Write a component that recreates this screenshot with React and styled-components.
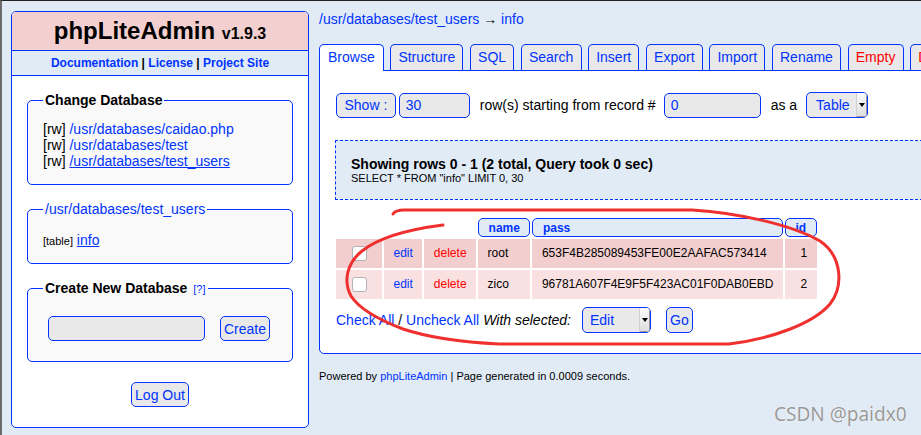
import React from 'react';
import styled, { createGlobalStyle } from 'styled-components';

const BLUE = '#0033ff';
const BG = '#e0ebf6';
const PINK = '#f3cfcf';
const RED = '#ff0000';

const Global = createGlobalStyle`
  html, body { margin: 0; padding: 0; background: ${BG}; overflow: hidden; }
  body { font-family: "Liberation Sans", Arial, sans-serif; color: #000; font-size: 14px; }
  a { color: ${BLUE}; text-decoration: none; }
`;

const Frame = styled.div`
  position: relative;
  width: 921px;
  height: 435px;
  box-sizing: border-box;
  border-top: 1px solid #222;
  border-left: 2px solid #6a6a6a;
  padding: 10px 0 0 9px;
  display: flex;
  align-items: flex-start;
  gap: 10px;
  overflow: hidden;
`;

/* ---------- sidebar ---------- */
const Sidebar = styled.div`
  flex: none;
  width: 298px;
  box-sizing: border-box;
  border: 1px solid ${BLUE};
  border-radius: 5px;
  background: #fff;
  overflow: hidden;
`;

const Title = styled.h1`
  margin: 0;
  background: ${PINK};
  text-align: center;
  font-size: 24px;
  font-weight: bold;
  line-height: 28px;
  height: 28px;
  padding: 5px 0;
  border-bottom: 1px solid ${BLUE};
`;

const Version = styled.span`
  font-size: 16px;
  line-height: 1;
`;

const LinkBar = styled.div`
  background: ${BG};
  text-align: center;
  padding: 5px 0;
  font-size: 12px;
  line-height: 14px;
  font-weight: bold;
  border-bottom: 1px solid ${BLUE};
`;

const SideBody = styled.div`
  padding: 16px 15px 20px;
`;

const Fieldset = styled.fieldset`
  margin: 0 0 16px;
  padding: 13px 15px 15px;
  border: 1px solid ${BLUE};
  border-radius: 5px;
  background: #f9f9f9;
  min-width: 0;
`;

const Legend = styled.legend`
  padding: 0 2px;
  font-size: 14px;
  line-height: 16px;
  font-weight: ${p => (p.$plain ? 'normal' : 'bold')};
`;

const Help = styled.a`
  font-size: 11px;
  line-height: 1;
  font-weight: normal;
  margin-left: 2px;
`;

const DbLine = styled.div`
  font-size: 14px;
  line-height: 16px;
  white-space: nowrap;
`;

const DbLink = styled.a`
  text-decoration: ${p => (p.$current ? 'underline' : 'none')};
`;

const TableLine = styled.div`
  margin-top: 2px;
  height: 16px;
  line-height: 16px;
`;

const Tag = styled.span`
  font-size: 11px;
  line-height: 1;
`;

const TableLink = styled.a`
  font-size: 14px;
  text-decoration: underline;
`;

const CreateRow = styled.div`
  display: flex;
  align-items: center;
  gap: 15px;
  padding: 7px 5px 5px;
`;

const LogoutRow = styled.div`
  display: flex;
  justify-content: center;
  margin-top: 20px;
`;

/* ---------- form controls ---------- */
const Button = styled.button`
  box-sizing: border-box;
  height: ${p => p.$h || 25}px;
  padding: 0 ${p => (p.$wide ? 7.5 : 3)}px;
  margin-left: ${p => p.$ml || 0}px;
  font-family: "Liberation Sans", Arial, sans-serif;
  font-size: 14px;
  color: ${BLUE};
  background: #e9e9e9;
  border: 1px solid ${BLUE};
  border-radius: 5px;
  flex: none;
`;

const TextInput = styled.input`
  box-sizing: border-box;
  width: ${p => p.$w}px;
  height: 25px;
  margin-left: ${p => p.$ml || 0}px;
  padding: 0 6px;
  font-family: "Liberation Sans", Arial, sans-serif;
  font-size: 14px;
  color: ${BLUE};
  background: #e9e9e9;
  border: 1px solid ${BLUE};
  border-radius: 5px;
  outline: none;
  flex: none;
`;

const SelectBox = styled.div`
  display: inline-flex;
  align-items: stretch;
  box-sizing: border-box;
  width: ${p => p.$w}px;
  height: 26px;
  margin-left: ${p => p.$ml || 0}px;
  border: 1px solid ${BLUE};
  border-radius: 5px;
  background: #e9e9e9;
  color: ${BLUE};
  overflow: hidden;
  flex: none;
`;

const SelectText = styled.span`
  flex: 1;
  padding-left: ${p => p.$pl}px;
  font-size: 14px;
  line-height: 24px;
`;

const SelectArrow = styled.span`
  position: relative;
  width: 10px;
  background: linear-gradient(#fbfbfb, #dcdcdc);
  border-left: 1px solid #cfcfcf;
  box-shadow: inset -1px -1px 0 #9a9a9a;
  &::after {
    content: '';
    position: absolute;
    left: 2px;
    top: 10px;
    border-left: 3px solid transparent;
    border-right: 3px solid transparent;
    border-top: 4px solid #000;
  }
`;

const Select = ({ w, ml, pl, children }) => (
  <SelectBox $w={w} $ml={ml}>
    <SelectText $pl={pl}>{children}</SelectText>
    <SelectArrow />
  </SelectBox>
);

/* ---------- main ---------- */
const Main = styled.div`
  flex: none;
  width: 680px;
`;

const Crumb = styled.div`
  font-size: 14px;
  line-height: 16px;
  margin-bottom: 17px;
  white-space: nowrap;
`;

const Tabs = styled.div`
  display: flex;
  gap: 6.5px;
  white-space: nowrap;
  position: relative;
  z-index: 1;
`;

const Tab = styled.a`
  display: block;
  flex: none;
  padding: 4px ${p => (p.$active ? 8 : 7.2)}px ${p => (p.$active ? 6 : 5)}px;
  margin-bottom: ${p => (p.$active ? -1 : 0)}px;
  font-size: 14px;
  line-height: 16px;
  color: ${p => (p.$danger ? RED : BLUE)};
  background: ${p => (p.$active ? '#fff' : '#e9e9e9')};
  border: 1px solid ${BLUE};
  border-bottom: none;
  border-radius: 5px 5px 0 0;
`;

const Panel = styled.div`
  background: #fff;
  border: 1px solid ${BLUE};
  border-radius: 0 0 0 5px;
  padding: 21px 0 20px 16px;
`;

const ControlRow = styled.div`
  display: flex;
  align-items: center;
  height: 26px;
  white-space: nowrap;
`;

const Label = styled.span`
  margin: 0 ${p => p.$mr || 0}px 0 ${p => p.$ml || 0}px;
  font-style: ${p => (p.$italic ? 'italic' : 'normal')};
`;

const InfoBox = styled.div`
  margin: 22px 20px 0 -1px;
  padding: 15px 14px 14px 15px;
  border: 1px dashed ${BLUE};
  background: ${BG};
`;

const InfoTitle = styled.div`
  font-size: 14px;
  line-height: 16px;
  font-weight: bold;
`;

const InfoSql = styled.div`
  font-size: 11px;
  line-height: 13px;
`;

const Grid = styled.table`
  margin: 16px 0 0 -2px;
  border-collapse: separate;
  border-spacing: 2px;
  font-size: 12px;
`;

const Th = styled.th`
  padding: 2px 9.5px 1px;
  line-height: 14px;
  text-align: left;
  font-weight: bold;
  color: ${BLUE};
  background: ${p => (p.$blank ? 'transparent' : BG)};
  border: ${p => (p.$blank ? 'none' : `1px solid ${BLUE}`)};
  border-radius: 5px;
`;

const Tr = styled.tr`
  background: ${p => (p.$odd ? '#f9e1e1' : '#f2cece')};
`;

const Td = styled.td`
  padding: 7px 9.5px 8px;
  line-height: 14px;
  text-align: ${p => p.$align || 'left'};
  color: ${p => p.$color || '#000'};
  white-space: nowrap;
`;

const CheckCell = styled.td`
  width: 46px;
  padding: 0;
  text-align: center;
  vertical-align: middle;
`;

const Check = styled.input`
  appearance: none;
  display: block;
  margin: 0 auto;
  width: 15px;
  height: 15px;
  box-sizing: border-box;
  border: 1px solid #b3b3b3;
  border-radius: 3px;
  background: #fff;
`;

const CellLink = styled.a`
  color: ${p => (p.$danger ? RED : BLUE)};
`;

const BulkRow = styled(ControlRow)`
  margin-top: 6px;
`;

const Dark = styled.span`
  color: #000;
`;

const Footer = styled.div`
  margin-top: 16px;
  font-size: 11px;
  line-height: 13px;
  white-space: nowrap;
`;

/* ---------- overlays ---------- */
const Scribble = styled.svg`
  position: absolute;
  left: 0;
  top: 0;
  pointer-events: none;
  z-index: 5;
`;

const Watermark = styled.div`
  position: absolute;
  left: 772px;
  top: 401px;
  font-family: "Noto Sans", "Open Sans", sans-serif;
  font-size: 19px;
  line-height: 24px;
  color: #999999;
  text-shadow: 0 0 1px #fff, 0 0 1px #fff;
  white-space: nowrap;
  z-index: 6;
`;

const rows = [
  { name: 'root', pass: '653F4B285089453FE00E2AAFAC573414', id: 1 },
  { name: 'zico', pass: '96781A607F4E9F5F423AC01F0DAB0EBD', id: 2 },
];

const tabs = [
  { label: 'Browse', active: true },
  { label: 'Structure' },
  { label: 'SQL' },
  { label: 'Search' },
  { label: 'Insert' },
  { label: 'Export' },
  { label: 'Import' },
  { label: 'Rename' },
  { label: 'Empty', danger: true },
  { label: 'Drop', danger: true },
];

export default function App() {
  return (
    <Frame>
      <Global />
      <Sidebar>
        <Title>
          phpLiteAdmin <Version>v1.9.3</Version>
        </Title>
        <LinkBar>
          <a href="#">Documentation</a> | <a href="#">License</a> | <a href="#">Project Site</a>
        </LinkBar>
        <SideBody>
          <Fieldset>
            <Legend>Change Database</Legend>
            <DbLine>[rw] <DbLink href="#">/usr/databases/caidao.php</DbLink></DbLine>
            <DbLine>[rw] <DbLink href="#">/usr/databases/test</DbLink></DbLine>
            <DbLine>[rw] <DbLink href="#" $current>/usr/databases/test_users</DbLink></DbLine>
          </Fieldset>
          <Fieldset>
            <Legend $plain><a href="#">/usr/databases/test_users</a></Legend>
            <TableLine>
              <Tag>[table]</Tag> <TableLink href="#">info</TableLink>
            </TableLine>
          </Fieldset>
          <Fieldset>
            <Legend>Create New Database <Help href="#">[?]</Help></Legend>
            <CreateRow>
              <TextInput $w={157} defaultValue="" />
              <Button>Create</Button>
            </CreateRow>
          </Fieldset>
          <LogoutRow>
            <Button>Log Out</Button>
          </LogoutRow>
        </SideBody>
      </Sidebar>

      <Main>
        <Crumb>
          <a href="#">/usr/databases/test_users</a> → <a href="#">info</a>
        </Crumb>
        <Tabs>
          {tabs.map(t => (
            <Tab key={t.label} href="#" $active={t.active} $danger={t.danger}>{t.label}</Tab>
          ))}
        </Tabs>
        <Panel>
          <ControlRow>
            <Button $wide>Show :</Button>
            <TextInput $w={71} $ml={3} defaultValue="30" />
            <Label $ml={10} $mr={8}>row(s) starting from record #</Label>
            <TextInput $w={97} defaultValue="0" />
            <Label $ml={10} $mr={9}>as a</Label>
            <Select w={62} pl={9}>Table</Select>
          </ControlRow>

          <InfoBox>
            <InfoTitle>Showing rows 0 - 1 (2 total, Query took 0 sec)</InfoTitle>
            <InfoSql>SELECT * FROM "info" LIMIT 0, 30</InfoSql>
          </InfoBox>

          <Grid>
            <thead>
              <tr>
                <Th $blank colSpan={3}></Th>
                <Th>name</Th>
                <Th>pass</Th>
                <Th>id</Th>
              </tr>
            </thead>
            <tbody>
              {rows.map((r, i) => (
                <Tr key={r.id} $odd={i % 2 === 1}>
                  <CheckCell><Check type="checkbox" /></CheckCell>
                  <Td $align="center"><CellLink href="#">edit</CellLink></Td>
                  <Td $align="center"><CellLink href="#" $danger>delete</CellLink></Td>
                  <Td>{r.name}</Td>
                  <Td>{r.pass}</Td>
                  <Td $align="right">{r.id}</Td>
                </Tr>
              ))}
            </tbody>
          </Grid>

          <BulkRow>
            <a href="#">Check All</a>
            <Dark>&nbsp;/&nbsp;</Dark>
            <a href="#">Uncheck All</a>
            <Label $ml={4} $italic>With selected:</Label>
            <Select w={69} ml={11} pl={7}>Edit</Select>
            <Button $ml={15} $h={26}>Go</Button>
          </BulkRow>
        </Panel>
        <Footer>
          Powered by <a href="#">phpLiteAdmin</a> | Page generated in 0.0009 seconds.
        </Footer>
      </Main>

      <Scribble width="921" height="435" viewBox="0 0 921 435">
        <path
          d="M391 213 C393 210 396 209 402 209 L690 209 C738 212 790 224 818 240 C840 255 842 285 828 303 C812 322 770 338 727 343 L497 343 C455 341 425 336 401 328 C380 320 358 309 349 295 C341 280 345 262 360 250 C375 238 402 229 441 224"
          fill="none"
          stroke="#f0302f"
          strokeWidth="3"
          strokeLinecap="round"
          strokeLinejoin="round"
        />
      </Scribble>
      <Watermark>CSDN @paidx0</Watermark>
    </Frame>
  );
}
